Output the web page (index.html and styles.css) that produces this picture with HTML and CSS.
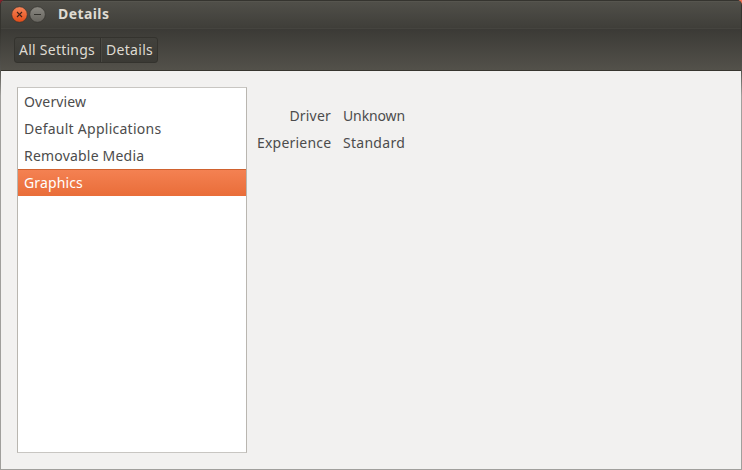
FILE: index.html
```html
<!DOCTYPE html>
<html lang="en">
<head>
<meta charset="utf-8">
<title>Details</title>
<link rel="stylesheet" href="styles.css">
</head>
<body>
<div class="window">
  <header class="titlebar">
    <svg class="controls" width="36" height="20" viewBox="0 0 36 20">
      <defs>
        <linearGradient id="close" x1="0" y1="0" x2="0" y2="1"><stop offset="0" stop-color="#f68559"/><stop offset="1" stop-color="#e24c18"/></linearGradient>
        <linearGradient id="min" x1="0" y1="0" x2="0" y2="1"><stop offset="0" stop-color="#8b8982"/><stop offset="1" stop-color="#65635d"/></linearGradient>
      </defs>
      <circle cx="9.5" cy="10.5" r="7.8" fill="url(#close)" stroke="#35342f" stroke-width=".7"/>
      <path d="M7 8l5 5M12 8l-5 5" stroke="#402219" stroke-width="1.1"/>
      <circle cx="27.5" cy="10.5" r="7.8" fill="url(#min)" stroke="#35342f" stroke-width=".7"/>
      <path d="M24 10.5h7" stroke="#33322d"/>
    </svg>
    <h1 class="title">Details</h1>
  </header>
  <nav class="toolbar">
    <div class="path">
      <button class="crumb crumb-all">All Settings</button>
      <button class="crumb crumb-current">Details</button>
    </div>
  </nav>
  <main class="content">
    <ul class="list">
      <li class="row overview">Overview</li>
      <li class="row applications">Default Applications</li>
      <li class="row media">Removable Media</li>
      <li class="row graphics selected">Graphics</li>
    </ul>
    <dl class="facts">
      <dt class="driver">Driver</dt><dd class="unknown">Unknown</dd>
      <dt class="experience">Experience</dt><dd class="standard">Standard</dd>
    </dl>
  </main>
</div>
</body>
</html>
```
FILE: styles.css
```css
* { box-sizing: border-box; }
body {
  margin: 0;
  background: linear-gradient(90deg, #84202a 50%, #f37355 50%);
  font: 14px/27px "Noto Sans", sans-serif;
  color: #4c4c4c;
}
.window {
  display: flex;
  flex-direction: column;
  width: 742px;
  height: 470px;
  padding: 0 1px 1px;
  border-radius: 5px 5px 0 0;
  overflow: hidden;
  background: linear-gradient(#35342f 30px, #55544f 71px, #a09f9c 96px);
}
.titlebar {
  display: flex;
  height: 28px;
  padding: 4px 0 0 9px;
  border-radius: 4px 4px 0 0;
  background: linear-gradient(#35342f 1px, #5c5b54 1px, #504f49 2px, #3f3e39);
}
.title {
  margin: -4px 0 0 12px;
  font-size: 14px;
  line-height: 28px;
  font-weight: 700;
  letter-spacing: .42px;
  color: #dfdbd2;
}
.toolbar {
  height: 43px;
  padding: 8px 13px;
  border-top: 1px solid #45443f;
  border-bottom: 1px solid #37352f;
  background: linear-gradient(#3b3a36, #53514a);
}
.path {
  display: flex;
  width: 144px;
  height: 26px;
  border: 1px solid #34332e;
  border-radius: 3px;
  background: linear-gradient(#42413c, #3b3a35);
}
.crumb {
  padding: 0 0 0 4px;
  border: 0;
  background: none;
  font: 14px/24px "Noto Sans", sans-serif;
  text-align: left;
  color: #dfdbd2;
  white-space: nowrap;
}
.crumb-all { width: 86px; border-right: 1px solid #32312d; letter-spacing: .25px; }
.crumb-current { width: 56px; border-left: 1px solid #4a4943; letter-spacing: .3px; }
.content {
  display: flex;
  flex: 1;
  padding: 16px;
  background: #f2f1f0;
}
.list {
  width: 230px;
  height: 366px;
  margin: 0;
  padding: 0;
  list-style: none;
  background: #fff;
  border: 1px solid #b9b6b0;
  border-top-color: #c8c6c2;
  border-bottom-color: #c8c6c2;
}
.row { height: 27px; padding-left: 6px; white-space: nowrap; }
.overview { letter-spacing: .15px; }
.applications { letter-spacing: .26px; }
.media { letter-spacing: .2px; }
.graphics { letter-spacing: .12px; }
.selected {
  color: #fff;
  background: linear-gradient(#d0622f 1px, #f48152 1px, #e96d39);
}
.facts {
  display: grid;
  grid-template-columns: 74px 80px;
  grid-auto-rows: 27px;
  column-gap: 12px;
  margin: 15px 0 0 10px;
}
.facts dt { text-align: right; letter-spacing: .2px; }
.facts dd { margin: 0; }
.unknown { letter-spacing: -.12px; }
.standard { letter-spacing: .28px; }
```
